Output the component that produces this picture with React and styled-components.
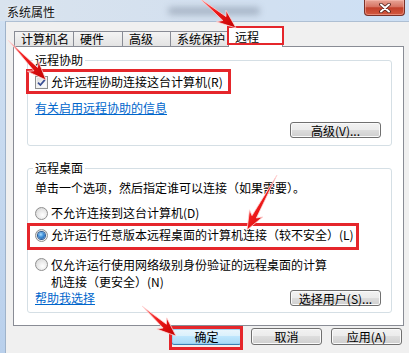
import React from 'react';
import styled, { createGlobalStyle, css } from 'styled-components';

const FONT = `"Noto Sans CJK SC", "Noto Sans", sans-serif`;
const RED = '#e5262b';

const Global = createGlobalStyle`
  html, body { margin: 0; padding: 0; }
  body { width: 409px; height: 353px; overflow: hidden; font-family: ${FONT}; font-size: 12px; }
`;

const Window = styled.div`
  position: relative;
  width: 409px;
  height: 353px;
  overflow: hidden;
  display: flex;
  flex-direction: column;
  background: linear-gradient(180deg, #dae4ef 0, #d0e0f2 21px, #b9d0ec 100%);
  font-family: ${FONT};
  font-size: 12px;
  line-height: 14px;
  color: #000;
`;

const TitleBar = styled.div`
  position: relative;
  flex: none;
  height: 21px;
  display: flex;
  align-items: flex-start;
  background: linear-gradient(90deg, #d9e3ee 0%, #d3e0ef 50%, #cde0f5 100%);
`;

const Title = styled.div`
  padding: 5px 0 0 7px;
  line-height: 14px;
  color: #111;
  text-shadow: 0 0 5px rgba(255, 255, 255, 0.9);
`;

const GlassBlur = styled.div`
  position: absolute;
  left: 168px;
  top: 7px;
  width: 92px;
  height: 8px;
  border-radius: 4px;
  background: rgba(80, 92, 115, 0.32);
  filter: blur(3px);
`;

const CloseButton = styled.div`
  box-sizing: border-box;
  margin-left: auto;
  margin-right: 4px;
  width: 41px;
  height: 16px;
  border: 1px solid #7a3128;
  border-top: none;
  border-radius: 0 0 4px 4px;
  background: linear-gradient(180deg, #e8a597 0%, #d77463 45%, #c2402b 52%, #d3593f 100%);
  box-shadow: inset 0 0 0 1px rgba(255, 200, 190, 0.45);
  display: flex;
  align-items: center;
  justify-content: center;
`;

const Client = styled.div`
  flex: 1;
  margin-left: 5px;
  border-left: 1px solid #9fb3ca;
  border-top: 1px solid #aebfd3;
  background: #f0f0f0;
  padding: 5px 7px 0 7px;
  display: flex;
  flex-direction: column;
`;

const TabsRow = styled.div`
  height: 19px;
  display: flex;
  align-items: flex-end;
  padding-left: 1px;
`;

const Tab = styled.div`
  position: relative;
  box-sizing: border-box;
  width: ${(p) => p.$w}px;
  height: 15px;
  margin-right: -1px;
  padding-left: 6px;
  border: 1px solid #898c95;
  border-bottom: none;
  background: linear-gradient(180deg, #f4f4f4, #e3e3e3);
  line-height: 14px;
  white-space: nowrap;
  ${(p) =>
    p.$active &&
    css`
      z-index: 2;
      height: 20px;
      margin-bottom: -1px;
      padding-top: 2px;
      background: #fff;
      &::after {
        content: '';
        position: absolute;
        left: -2px;
        right: -2px;
        top: -2px;
        bottom: 2px;
        border: 2px solid ${RED};
      }
    `}
`;

const Panel = styled.div`
  box-sizing: border-box;
  width: 391px;
  height: 280px;
  border: 1px solid #898c95;
  background: #fff;
  padding: 6px 11px 0 13px;
  display: flex;
  flex-direction: column;
  gap: 15px;
`;

const Group = styled.fieldset`
  margin: 0;
  min-width: 0;
  border: 1px solid #d5dfe5;
  border-radius: 3px;
  padding: ${(p) => p.$pt}px 10px ${(p) => p.$pb}px 7px;
  display: flex;
  flex-direction: column;
  align-items: flex-start;
`;

const Legend = styled.legend`
  margin-left: -2px;
  padding: 0 2px;
  line-height: 14px;
`;

const OptionRow = styled.div`
  position: relative;
  display: flex;
  align-items: ${(p) => (p.$top ? 'flex-start' : 'center')};
  gap: 3px;
  margin-top: ${(p) => p.$mt || 0}px;
  line-height: ${(p) => p.$lh || 14}px;
  white-space: nowrap;
  ${(p) =>
    p.$mark &&
    css`
      &::after {
        content: '';
        position: absolute;
        left: ${p.$mark.l}px;
        top: ${p.$mark.t}px;
        width: ${p.$mark.w}px;
        height: ${p.$mark.h}px;
        box-sizing: border-box;
        border: 3px solid ${RED};
        pointer-events: none;
      }
    `}
`;

const Text = styled.div`
  margin-top: ${(p) => p.$mt || 0}px;
  white-space: nowrap;
`;

const CheckBox = styled.span`
  box-sizing: border-box;
  flex: none;
  width: 13px;
  height: 13px;
  border: 1px solid #8e8f8f;
  background: linear-gradient(135deg, #d6d6d6, #f6f6f6 60%, #ffffff);
  box-shadow: inset 0 0 0 1px #f2f2f2;
  display: flex;
  align-items: center;
  justify-content: center;
`;

const Radio = styled.span`
  box-sizing: border-box;
  flex: none;
  width: 13px;
  height: 13px;
  margin-top: ${(p) => p.$mt || 0}px;
  border-radius: 50%;
  border: 1px solid #8f8f8f;
  background: radial-gradient(circle at 60% 65%, #ffffff 0%, #e6e6e6 55%, #cfcfcf 100%);
  display: flex;
  align-items: center;
  justify-content: center;
  ${(p) =>
    p.$checked &&
    css`
      &::before {
        content: '';
        width: 7px;
        height: 7px;
        border-radius: 50%;
        background: radial-gradient(circle at 40% 35%, #a8dcff 0%, #3f8fd8 45%, #1c4f96 100%);
        box-shadow: 0 0 0 1px #2a5a94;
      }
    `}
`;

const Link = styled.a`
  margin-top: ${(p) => p.$mt || 0}px;
  color: #0066cc;
  text-decoration: underline;
  white-space: nowrap;
  cursor: pointer;
`;

const ButtonLine = styled.div`
  align-self: stretch;
  display: flex;
  align-items: center;
  justify-content: ${(p) => (p.$split ? 'space-between' : 'flex-end')};
  margin-top: ${(p) => p.$mt || 0}px;
`;

const Button = styled.button`
  position: relative;
  box-sizing: border-box;
  width: ${(p) => p.$w}px;
  height: ${(p) => p.$h || 16}px;
  padding: 0;
  font: inherit;
  line-height: 13px;
  color: #000;
  border: 1px solid #707070;
  border-radius: 3px;
  background: linear-gradient(180deg, #f2f2f2 0%, #ebebeb 50%, #dddddd 50%, #cfcfcf 100%);
  box-shadow: inset 0 0 0 1px #fafafa;
  white-space: nowrap;
  ${(p) =>
    p.$default &&
    css`
      border-color: #3c7fb1;
      background: linear-gradient(180deg, #eaf6fd 0%, #d9f0fc 50%, #bee6fd 50%, #a7d9f5 100%);
      box-shadow: inset 0 0 0 1px #9ad3f2;
    `}
  ${(p) =>
    p.$mark &&
    css`
      &::after {
        content: '';
        position: absolute;
        left: -3px;
        top: -3px;
        width: 74px;
        height: 24px;
        box-sizing: border-box;
        border: 3px solid ${RED};
      }
    `}
`;

const DialogButtons = styled.div`
  display: flex;
  justify-content: flex-end;
  gap: 9px;
  margin-top: 2px;
`;

const Overlay = styled.svg`
  position: absolute;
  left: 0;
  top: 0;
  width: 409px;
  height: 353px;
  pointer-events: none;
  z-index: 10;
`;

function arrowPoints([tx, ty], [px, py], headLen = 19, headW = 15, shaftW = 5) {
  const dx = px - tx;
  const dy = py - ty;
  const L = Math.hypot(dx, dy);
  const ux = dx / L;
  const uy = dy / L;
  const nx = -uy;
  const ny = ux;
  const bx = px - ux * headLen;
  const by = py - uy * headLen;
  const jx = bx + ux * 4;
  const jy = by + uy * 4;
  const pts = [
    [tx, ty],
    [jx + (nx * shaftW) / 2, jy + (ny * shaftW) / 2],
    [bx + (nx * headW) / 2, by + (ny * headW) / 2],
    [px, py],
    [bx - (nx * headW) / 2, by - (ny * headW) / 2],
    [jx - (nx * shaftW) / 2, jy - (ny * shaftW) / 2],
  ];
  return pts.map((p) => p.map((v) => v.toFixed(1)).join(',')).join(' ');
}

const ARROWS = [
  { tail: [8, 40], tip: [46, 80] },
  { tail: [198, -3], tip: [236, 28] },
  { tail: [277, 175], tip: [247, 230] },
  { tail: [142, 306], tip: [176, 336] },
];

const Arrows = () => (
  <Overlay viewBox="0 0 409 353">
    <defs>
      <linearGradient id="arrowFill" x1="0" y1="0" x2="1" y2="1">
        <stop offset="0" stopColor="#ff7a7a" />
        <stop offset="0.45" stopColor="#f01c1c" />
        <stop offset="1" stopColor="#c10000" />
      </linearGradient>
    </defs>
    {ARROWS.map((a, i) => (
      <polygon
        key={i}
        points={arrowPoints(a.tail, a.tip)}
        fill="url(#arrowFill)"
        stroke="#ffd7d7"
        strokeWidth="0.8"
        strokeLinejoin="round"
      />
    ))}
  </Overlay>
);

const tabs = [
  { label: '计算机名', w: 60 },
  { label: '硬件', w: 50 },
  { label: '高级', w: 49 },
  { label: '系统保护', w: 59 },
  { label: '远程', w: 55, active: true },
];

export default function App() {
  return (
    <>
      <Global />
      <Window>
        <TitleBar>
          <Title>系统属性</Title>
          <GlassBlur />
          <CloseButton>
            <svg width="14" height="10" viewBox="0 0 14 10">
              <path d="M3 1.5 L11 8.5 M11 1.5 L3 8.5" stroke="#4a1d18" strokeWidth="3.6" strokeLinecap="round" />
              <path d="M3 1.5 L11 8.5 M11 1.5 L3 8.5" stroke="#ffffff" strokeWidth="2" strokeLinecap="round" />
            </svg>
          </CloseButton>
        </TitleBar>
        <Client>
          <TabsRow>
            {tabs.map((t) => (
              <Tab key={t.label} $w={t.w} $active={t.active}>
                {t.label}
              </Tab>
            ))}
          </TabsRow>
          <Panel>
            <Group $pt={8} $pb={7}>
              <Legend>远程协助</Legend>
              <OptionRow $mark={{ l: -9, t: -6, w: 205, h: 25 }}>
                <CheckBox>
                  <svg width="9" height="9" viewBox="0 0 9 9">
                    <path d="M1 4.6 L3.4 7 L8 1.6" fill="none" stroke="#3a4f94" strokeWidth="1.7" />
                  </svg>
                </CheckBox>
                <span>允许远程协助连接这台计算机(R)</span>
              </OptionRow>
              <Link $mt={12}>有关启用远程协助的信息</Link>
              <ButtonLine $mt={7}>
                <Button $w={91}>高级(V)...</Button>
              </ButtonLine>
            </Group>
            <Group $pt={6} $pb={6}>
              <Legend>远程桌面</Legend>
              <Text>单击一个选项，然后指定谁可以连接（如果需要）。</Text>
              <OptionRow $mt={11}>
                <Radio />
                <span>不允许连接到这台计算机(D)</span>
              </OptionRow>
              <OptionRow $mt={8} $mark={{ l: -8, t: -5, w: 332, h: 27 }}>
                <Radio $checked />
                <span>允许运行任意版本远程桌面的计算机连接（较不安全）(L)</span>
              </OptionRow>
              <OptionRow $mt={14} $top $lh={17}>
                <Radio $mt={2} />
                <span>
                  仅允许运行使用网络级别身份验证的远程桌面的计算
                  <br />
                  机连接（更安全）(N)
                </span>
              </OptionRow>
              <ButtonLine $mt={0} $split>
                <Link>帮助我选择</Link>
                <Button $w={91}>选择用户(S)...</Button>
              </ButtonLine>
            </Group>
          </Panel>
          <DialogButtons>
            <Button $w={71} $h={17} $default $mark>
              确定
            </Button>
            <Button $w={71} $h={17}>
              取消
            </Button>
            <Button $w={71} $h={17}>
              应用(A)
            </Button>
          </DialogButtons>
        </Client>
        <Arrows />
      </Window>
    </>
  );
}
